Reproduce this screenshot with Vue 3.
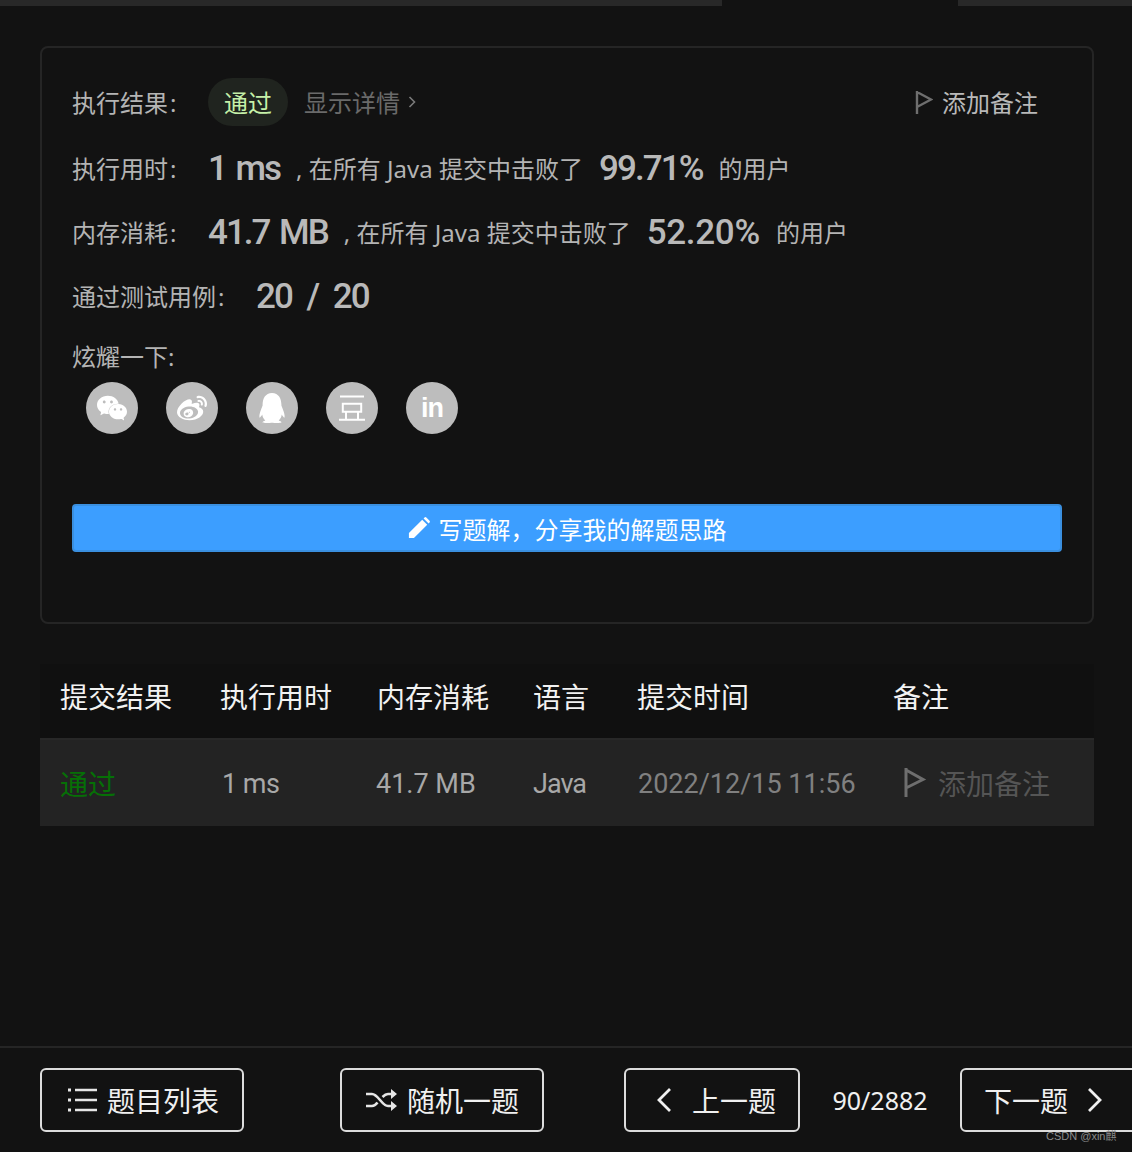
<script setup>
const columns = [
  { title: '提交结果', width: 160 },
  { title: '执行用时', width: 157 },
  { title: '内存消耗', width: 156 },
  { title: '语言', width: 104 },
  { title: '提交时间', width: 256 },
  { title: '备注', width: 181 }
]
const stats = [
  { label: '执行用时', value: '1 ms', percent: '99.71%', pctClass: 'big-pct' },
  { label: '内存消耗', value: '41.7 MB', percent: '52.20%', pctClass: 'big-pct-wide' }
]
</script>

<template>
  <div class="page">
    <div class="tabs">
      <div class="tab-a"></div>
      <div class="tab-gap"></div>
      <div class="tab-b"></div>
    </div>

    <main class="content">
      <section class="card">
        <div class="row row-first">
          <span class="label">执行结果<span class="colon">:</span></span>
          <span class="pill">通过</span>
          <span class="details">显示详情</span>
          <svg class="chev" viewBox="0 0 8 14" width="8" height="14"><path d="M1.500 2l5 5-5 5" fill="none" stroke="currentColor" stroke-width="1.6"/></svg>
          <span class="note">
            <svg class="flag" viewBox="0 0 18 26" width="18" height="26"><path d="M2 1v23M2 2l14 7.500L2 17" fill="none" stroke="#6e6e6e" stroke-width="2.4"/></svg>
            添加备注
          </span>
        </div>
        <div v-for="s in stats" :key="s.label" class="row">
          <span class="label">{{ s.label }}<span class="colon">:</span></span>
          <span class="big">{{ s.value }}</span>
          <span class="sentence">, 在所有 Java 提交中击败了</span>
          <span class="big" :class="s.pctClass">{{ s.percent }}</span>
          <span class="sentence">的用户</span>
        </div>
        <div class="row">
          <span class="label label-wide">通过测试用例<span class="colon">:</span></span>
          <span class="big big-cases">20 / 20</span>
        </div>
        <div class="share-label">炫耀一下:</div>
        <div class="share">
          <span class="circle">
            <svg viewBox="0 0 24 24" width="30" height="30"><path fill="#fff" d="M8.691 2.188C3.891 2.188 0 5.476 0 9.53c0 2.212 1.17 4.203 3.002 5.55a.59.59 0 0 1 .213.665l-.39 1.48c-.019.07-.048.141-.048.213 0 .163.13.295.29.295a.326.326 0 0 0 .167-.054l1.903-1.114a.864.864 0 0 1 .717-.098 10.16 10.16 0 0 0 2.837.403c.276 0 .543-.027.811-.05-.857-2.578.157-4.972 1.932-6.446 1.703-1.415 3.882-1.98 5.853-1.838-.576-3.583-4.196-6.348-8.596-6.348zM5.785 5.991c.642 0 1.162.529 1.162 1.18a1.17 1.17 0 0 1-1.162 1.178A1.17 1.17 0 0 1 4.623 7.17c0-.651.52-1.18 1.162-1.18zm5.813 0c.642 0 1.162.529 1.162 1.18a1.17 1.17 0 0 1-1.162 1.178 1.17 1.17 0 0 1-1.162-1.178c0-.651.52-1.18 1.162-1.18zm5.34 2.867c-1.797-.052-3.746.512-5.28 1.786-1.72 1.428-2.687 3.72-1.78 6.22.942 2.453 3.666 4.229 6.884 4.229.826 0 1.622-.12 2.361-.336a.722.722 0 0 1 .598.082l1.584.926a.272.272 0 0 0 .14.047c.134 0 .24-.111.24-.247 0-.06-.023-.12-.038-.177l-.327-1.233a.582.582 0 0 1-.023-.156.49.49 0 0 1 .201-.398C23.024 18.48 24 16.82 24 14.98c0-3.21-2.931-5.837-6.656-6.088V8.89c-.135-.01-.27-.027-.407-.03zm-2.53 3.274c.535 0 .969.44.969.982a.976.976 0 0 1-.969.983.976.976 0 0 1-.969-.983c0-.542.434-.982.97-.982zm4.844 0c.535 0 .969.44.969.982a.976.976 0 0 1-.969.983.976.976 0 0 1-.969-.983c0-.542.434-.982.969-.982z"/></svg>
          </span>
          <span class="circle">
            <svg viewBox="0 0 24 24" width="30" height="30"><path fill="#fff" d="M10.098 20.323c-3.977.391-7.414-1.406-7.672-4.02-.259-2.609 2.759-5.047 6.74-5.441 3.979-.394 7.413 1.404 7.671 4.018.259 2.6-2.759 5.049-6.737 5.439l-.002.004zM9.05 17.219c-.384.616-1.208.884-1.829.602-.612-.279-.793-.991-.406-1.593.379-.595 1.176-.861 1.793-.601.622.263.82.972.442 1.592zm1.27-1.627c-.141.237-.449.353-.689.253-.236-.09-.313-.361-.177-.586.138-.227.436-.346.672-.24.239.09.315.36.18.601l.014-.028zm.176-2.719c-1.893-.493-4.033.45-4.857 2.118-.836 1.704-.026 3.591 1.886 4.21 1.983.64 4.318-.341 5.132-2.179.8-1.793-.201-3.642-2.161-4.149zm7.563-1.224c-.346-.105-.57-.18-.405-.615.375-.977.42-1.804 0-2.404-.781-1.112-2.915-1.053-5.364-.03 0 0-.766.331-.571-.271.376-1.217.315-2.224-.27-2.809-1.338-1.337-4.869.045-7.888 3.08C1.309 10.87 0 13.273 0 15.348c0 3.981 5.099 6.395 10.086 6.395 6.536 0 10.888-3.801 10.888-6.82 0-1.822-1.547-2.854-2.915-3.284v.01zm1.908-5.092c-.766-.856-1.908-1.187-2.96-.962-.436.09-.706.511-.616.932.09.42.511.691.932.602.511-.105 1.067.044 1.442.465.376.421.466.977.316 1.473-.136.406.089.856.51.992.405.119.857-.105.992-.512.33-1.021.12-2.178-.646-3.035l.03.045zm2.418-2.195c-1.576-1.757-3.905-2.419-6.054-1.968-.496.104-.812.587-.706 1.081.104.496.586.813 1.082.707 1.532-.331 3.185.15 4.296 1.383 1.112 1.246 1.429 2.943.947 4.416-.165.48.106 1.007.586 1.157.479.165.991-.104 1.157-.586.675-2.088.241-4.478-1.338-6.235l.03.045z"/></svg>
          </span>
          <span class="circle">
            <svg viewBox="0 0 24 24" width="30" height="30"><path fill="#fff" d="M21.395 15.035a40 40 0 0 0-.803-2.264l-1.079-2.695c.001-.032.014-.562.014-.836C19.526 4.632 17.351 0 12 0S4.474 4.632 4.474 9.241c0 .274.013.804.014.836l-1.08 2.695a39 39 0 0 0-.802 2.264c-1.021 3.283-.69 4.643-.438 4.673.54.065 2.103-2.472 2.103-2.472 0 1.469.756 3.387 2.394 4.771-.612.188-1.363.479-1.845.835-.434.32-.379.646-.301.778.343.578 5.883.369 7.482.189 1.6.18 7.14.389 7.483-.189.078-.132.132-.458-.301-.778-.483-.356-1.233-.646-1.846-.836 1.637-1.384 2.393-3.302 2.393-4.771 0 0 1.563 2.537 2.103 2.472.251-.03.581-1.39-.438-4.673"/></svg>
          </span>
          <span class="circle">
            <svg viewBox="0 0 26 28" width="26" height="28" fill="none" stroke="#fff" stroke-width="2"><path d="M1 2.500h24M3.800 9.700h18.400v8H3.800zM7 18v7M19 18v7M0 25.700h26"/></svg>
          </span>
          <span class="circle circle-in">in</span>
        </div>
        <div class="solution">
          <svg viewBox="0 0 24 24" width="22" height="22"><path fill="#fff" d="M1 23v-5.500L15.500 3l5.500 5.500L6.500 23zM17 1.500l1-1a1.500 1.500 0 0 1 2 0l3.500 3.500a1.500 1.500 0 0 1 0 2l-1 1z"/></svg>
          <span>写题解，分享我的解题思路</span>
        </div>
      </section>

      <section class="table">
        <div class="thead">
          <div v-for="c in columns" :key="c.title" class="cell" :style="{ width: c.width + 'px' }">{{ c.title }}</div>
        </div>
        <div class="tbody">
          <div class="cell cell-pass">通过</div>
          <div class="cell cell-text cell-time">1 ms</div>
          <div class="cell cell-text cell-mem">41.7 MB</div>
          <div class="cell cell-text cell-lang">Java</div>
          <div class="cell cell-text cell-date">2022/12/15 11:56</div>
          <div class="cell cell-note">
            <svg viewBox="0 0 24 32" width="24" height="32"><path d="M3 1v29M3 3l17 9.500L3 21" fill="none" stroke="#6e6e6e" stroke-width="3"/></svg>
            <span>添加备注</span>
          </div>
        </div>
      </section>
    </main>

    <footer class="footer">
      <button class="btn btn-list">
        <svg viewBox="0 0 30 24" width="30" height="24" fill="none" stroke="#e6e6e6" stroke-width="2.400"><path d="M8 2h22M8 12h22M8 22h22"/><path d="M1 2h3M1 12h3M1 22h3" stroke-width="3"/></svg>
        题目列表
      </button>
      <button class="btn btn-random">
        <svg viewBox="0 0 32 24" width="32" height="24" fill="none" stroke="#e6e6e6" stroke-width="2.600"><path d="M1 6h6c6 0 10 12 16 12h5M1 18h6c2.500 0 4-1.500 5.500-3.500M17.500 9C19 7.500 20.500 6 23 6h5"/><path fill="#e6e6e6" stroke="none" d="M26 1l6 5-6 5zM26 13l6 5-6 5z"/></svg>
        随机一题
      </button>
      <button class="btn btn-prev">
        <svg viewBox="0 0 16 26" width="16" height="26"><path d="M14 2L3 13l11 11" fill="none" stroke="#f0f0f0" stroke-width="2.800"/></svg>
        <span>上一题</span>
      </button>
      <span class="count">90/2882</span>
      <button class="btn btn-next">
        <span>下一题</span>
        <svg viewBox="0 0 16 26" width="16" height="26"><path d="M2 2l11 11L2 24" fill="none" stroke="#f0f0f0" stroke-width="2.800"/></svg>
      </button>
    </footer>
    <span class="mark">CSDN @xin麒</span>
  </div>
</template>

<style>
html, body { margin: 0; background: #121212; }
</style>

<style scoped>
.page {
  position: relative;
  width: 1132px;
  height: 1152px;
  overflow: hidden;
  display: flex;
  flex-direction: column;
  background: #121212;
  font-family: "Noto Sans", "Noto Sans CJK SC", sans-serif;
  color: #bdbdbd;
}
.tabs { display: flex; height: 6px; flex: none; }
.tab-a { width: 722px; background: #282828; }
.tab-gap { width: 236px; background: #121212; }
.tab-b { flex: 1; background: #282828; }

.content { flex: 1; padding: 40px 38px 0 40px; }

.card {
  box-sizing: border-box;
  height: 578px;
  border: 2px solid #252525;
  border-radius: 8px;
  padding: 30px 30px 0;
}
.row {
  display: flex;
  align-items: center;
  gap: 16px;
  height: 48px;
  margin-bottom: 16px;
  font-size: 24px;
  line-height: 48px;
  white-space: nowrap;
}
.row-first { gap: 0; margin-bottom: 19px; }
.row-first .label, .row-first .details, .row-first .note { padding-top: 2px; }
.label { width: 120px; flex: none; color: #b4b4b4; }
.label-wide { width: 168px; }
.colon { margin-left: 2px; }
.pill {
  width: 80px;
  height: 48px;
  border-radius: 24px;
  background: #20241f;
  color: #c5f0a8;
  line-height: 50px;
  text-align: center;
  margin-left: 16px;
}
.details { margin-left: 16px; color: #6a6a6a; }
.chev { margin-left: 8px; color: #7a7a7a; }
.note {
  margin-left: auto;
  margin-right: 24px;
  display: flex;
  align-items: center;
  gap: 9px;
  color: #b9b9b9;
}
.big {
  font-family: Roboto, "Noto Sans", sans-serif;
  font-size: 35px;
  font-weight: 500;
  letter-spacing: -2px;
  word-spacing: 3px;
  color: #b9b9b9;
}
.big-pct { letter-spacing: -1.900px; }
.big-pct-wide { letter-spacing: -0.300px; }
.big-cases { word-spacing: 8px; }
.sentence { color: #b4b4b4; }
.share-label {
  font-size: 24px;
  line-height: 32px;
  margin-top: 20px;
  color: #b4b4b4;
}
.share {
  display: flex;
  gap: 28px;
  margin: 9px 0 0 14px;
}
.circle {
  width: 52px;
  height: 52px;
  border-radius: 50%;
  background: #bdbdbd;
  display: flex;
  align-items: center;
  justify-content: center;
  color: #fff;
}
.circle-in {
  font-family: "Liberation Sans", sans-serif;
  font-size: 27px;
  font-weight: 700;
  letter-spacing: -1px;
  line-height: 1;
}
.solution {
  box-sizing: border-box;
  margin-top: 70px;
  height: 48px;
  width: 990px;
  background: #3c9eff;
  border: 2px solid #3a8fdf;
  border-radius: 4px;
  color: #fff;
  font-size: 24px;
  display: flex;
  align-items: center;
  justify-content: center;
  gap: 9px;
}

.table { margin-top: 40px; width: 1054px; }
.thead {
  display: flex;
  box-sizing: border-box;
  height: 74px;
  align-items: center;
  padding: 0 0 10px 20px;
  background: #101010;
  color: #f2f2f2;
  font-size: 28px;
}
.thead .cell { flex: none; }
.tbody {
  display: flex;
  align-items: center;
  height: 88px;
  background: #232323;
  border-top: 2px solid #282828;
  box-sizing: border-box;
  padding-left: 20px;
  font-family: Roboto, "Noto Sans", "Noto Sans CJK SC", sans-serif;
  font-size: 27px;
  color: #a8a8a8;
  white-space: nowrap;
}
.tbody .cell { flex: none; }
.cell-text { padding-top: 2px; box-sizing: border-box; }
.cell-pass { width: 162px; color: #067006; font-size: 28px; }
.cell-time { width: 154px; letter-spacing: -0.500px; }
.cell-mem { width: 157px; }
.cell-lang { width: 105px; letter-spacing: -1px; }
.cell-date { width: 265px; color: #808080; }
.cell-note { display: flex; align-items: center; gap: 11px; font-size: 28px; color: #555; }

.footer {
  position: relative;
  flex: none;
  height: 106px;
  border-top: 2px solid #252525;
  box-sizing: border-box;
  display: flex;
  align-items: flex-start;
  padding: 20px 0 0 40px;
  font-size: 28px;
  color: #f0f0f0;
}
.btn {
  flex: none;
  box-sizing: border-box;
  height: 64px;
  border: 2px solid #dcdcdc;
  border-radius: 6px;
  background: transparent;
  color: #f0f0f0;
  font: inherit;
  display: flex;
  align-items: center;
  justify-content: center;
  padding: 0;
  white-space: nowrap;
}
.btn-list { width: 204px; gap: 10px; margin-right: 96px; justify-content: flex-start; padding-left: 25px; }
.btn-random { width: 204px; gap: 10px; margin-right: 80px; }
.btn-prev { width: 176px; gap: 20px; justify-content: flex-start; padding-left: 30px; }
.count { flex: none; width: 160px; line-height: 64px; text-align: center; font-size: 25px; }
.btn-next { width: 200px; gap: 19px; justify-content: flex-start; padding-left: 22px; }

.mark {
  position: absolute;
  left: 1046px;
  top: 1129px;
  font-family: "Liberation Sans", "Noto Sans CJK SC", sans-serif;
  font-size: 11px;
  line-height: 14px;
  color: #8a8a8a;
}
</style>
